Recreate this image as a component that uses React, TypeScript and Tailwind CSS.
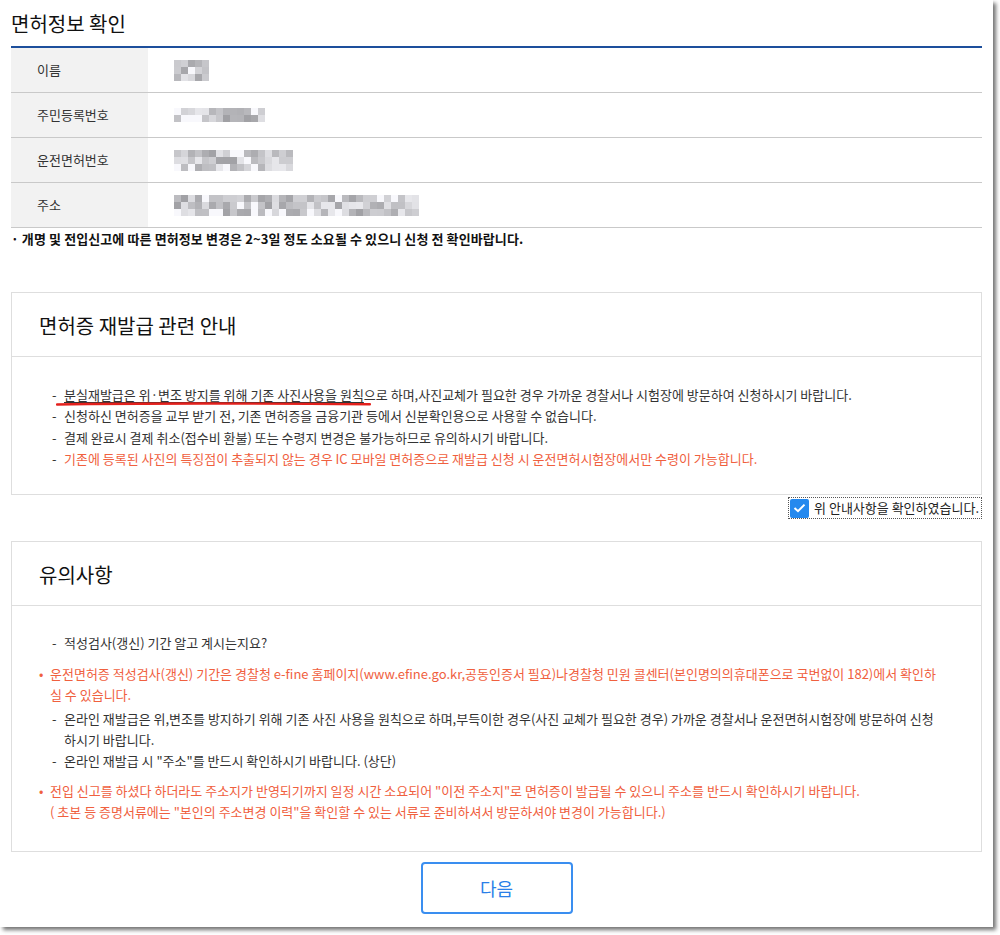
import React from "react";

const rows = [
  { label: "이름", cols: 5, lines: 3, seed: 7 },
  { label: "주민등록번호", cols: 13, lines: 2, seed: 19 },
  { label: "운전면허번호", cols: 17, lines: 3, seed: 31 },
  { label: "주소", cols: 35, lines: 3, seed: 53 },
];

// pixelated blocks standing in for the masked personal data
function Mosaic({ cols, lines, seed }: { cols: number; lines: number; seed: number }) {
  const cells: string[] = [];
  let s = seed;
  for (let i = 0; i < cols * lines; i++) {
    s = (s * 9301 + 49297) % 233280;
    const r = s / 233280;
    const v = r > 0.85 ? 248 : Math.round(160 + r * 85);
    cells.push(`rgb(${v},${v},${Math.min(255, v + 4)})`);
  }
  return (
    <div className="grid" style={{ gridTemplateColumns: `repeat(${cols}, 7px)` }}>
      {cells.map((c, i) => (
        <div key={i} className="h-[7px]" style={{ background: c }} />
      ))}
    </div>
  );
}

function Dash({ children, red }: { children: React.ReactNode; red?: boolean }) {
  return (
    <li className="flex">
      <span className="w-[12px] shrink-0 text-[#333]">-</span>
      <span className={red ? "text-[#f0603e]" : "text-[#333]"}>{children}</span>
    </li>
  );
}

function Bullet({ children, className }: { children: React.ReactNode; className?: string }) {
  return (
    <div className={"flex text-[#f0603e] " + (className ?? "")}>
      <span className="w-[11px] shrink-0">•</span>
      <span>{children}</span>
    </div>
  );
}

export default function App() {
  const [checked, setChecked] = React.useState(true);

  return (
    <div className="min-h-[935px] bg-white font-['Noto_Sans_CJK_KR','Noto_Sans',sans-serif] text-[13px] text-[#333]">
      <div className="h-[927px] w-[993px] bg-white px-[11px] shadow-[3px_3px_4px_rgba(0,0,0,0.55)]">
        {/* 면허정보 */}
        <h1 className="border-b-2 border-[#1d4f9c] pt-[12px] pb-[10px] text-[20px] leading-[24px] text-[#111]">
          면허정보 확인
        </h1>
        <div>
          {rows.map((r) => (
            <div key={r.label} className="flex h-[45px] border-b border-[#c9c9c9]">
              <div className="flex w-[137px] items-center bg-[#f2f2f2] pl-[26px] text-[#333]">{r.label}</div>
              <div className="flex items-center pl-[26px]">
                <Mosaic cols={r.cols} lines={r.lines} seed={r.seed} />
              </div>
            </div>
          ))}
        </div>
        <p className="font-bold leading-[21px] tracking-[0.1px] text-[#111]">
          · 개명 및 전입신고에 따른 면허정보 변경은 2~3일 정도 소요될 수 있으니 신청 전 확인바랍니다.
        </p>

        {/* 재발급 안내 */}
        <section className="mt-[43px] border border-[#dedede]">
          <h2 className="border-b border-[#dedede] pt-[19px] pb-[16px] pl-[27px] text-[20px] leading-[28px] text-[#111]">
            면허증 재발급 관련 안내
          </h2>
          <ul className="pt-[27px] pb-[25px] pl-[40px] leading-[21.3px]">
            <Dash>
              <span className="relative">
                <span className="underline decoration-[#333] underline-offset-2">
                  분실재발급은 위·변조 방지를 위해 기존 사진사용을 원칙
                </span>
                <svg
                  className="pointer-events-none absolute left-[-8px] top-[16px] h-[6px] w-[calc(100%+16px)]"
                  viewBox="0 0 318 6"
                  preserveAspectRatio="none"
                >
                  <path d="M1 3.5 C 80 2.2, 200 2.4, 316 3.2" stroke="#e3201c" strokeWidth="2.4" fill="none" strokeLinecap="round" />
                </svg>
              </span>
              으로 하며,사진교체가 필요한 경우 가까운 경찰서나 시험장에 방문하여 신청하시기 바랍니다.
            </Dash>
            <Dash>신청하신 면허증을 교부 받기 전, 기존 면허증을 금융기관 등에서 신분확인용으로 사용할 수 없습니다.</Dash>
            <Dash>결제 완료시 결제 취소(접수비 환불) 또는 수령지 변경은 불가능하므로 유의하시기 바랍니다.</Dash>
            <Dash red>
              기존에 등록된 사진의 특징점이 추출되지 않는 경우 IC 모바일 면허증으로 재발급 신청 시 운전면허시험장에서만 수령이 가능합니다.
            </Dash>
          </ul>
        </section>

        <div className="mt-[2px] flex justify-end">
          <label className="flex h-[22px] cursor-pointer items-center gap-[5px] border border-dotted border-[#555] pl-[1px] pr-[2px] text-[#222]">
            <button
              type="button"
              onClick={() => setChecked(!checked)}
              className={
                "flex h-[19px] w-[19px] items-center justify-center rounded-[2px] " +
                (checked ? "bg-[#2589ee]" : "border border-[#888] bg-white")
              }
            >
              {checked && (
                <svg width="13" height="10" viewBox="0 0 13 10">
                  <path d="M1.5 5 L5 8.2 L11.5 1.6" stroke="white" strokeWidth="2" fill="none" />
                </svg>
              )}
            </button>
            위 안내사항을 확인하였습니다.
          </label>
        </div>

        {/* 유의사항 */}
        <section className="mt-[22px] border border-[#dedede]">
          <h2 className="border-b border-[#dedede] pt-[19px] pb-[16px] pl-[27px] text-[20px] leading-[28px] text-[#111]">
            유의사항
          </h2>
          <div className="pt-[26px] pb-[29px] pl-[27px] pr-[40px] leading-[21px]">
            <ul className="pl-[13px]">
              <Dash>적성검사(갱신) 기간 알고 계시는지요?</Dash>
            </ul>
            <Bullet className="mt-[10px]">
              운전면허증 적성검사(갱신) 기간은 경찰청 e-fine 홈페이지(www.efine.go.kr,공동인증서 필요)나경찰청 민원 콜센터(본인명의의휴대폰으로 국번없이 182)에서 확인하실 수 있습니다.
            </Bullet>
            <ul className="mt-[3px] pl-[13px]">
              <Dash>
                온라인 재발급은 위,변조를 방지하기 위해 기존 사진 사용을 원칙으로 하며,부득이한 경우(사진 교체가 필요한 경우) 가까운 경찰서나 운전면허시험장에 방문하여 신청하시기 바랍니다.
              </Dash>
              <Dash>온라인 재발급 시 "주소"를 반드시 확인하시기 바랍니다. (상단)</Dash>
            </ul>
            <Bullet className="mt-[9px]">
              전입 신고를 하셨다 하더라도 주소지가 반영되기까지 일정 시간 소요되어 "이전 주소지"로 면허증이 발급될 수 있으니 주소를 반드시 확인하시기 바랍니다.
              <br />( 초본 등 증명서류에는 "본인의 주소변경 이력"을 확인할 수 있는 서류로 준비하셔서 방문하셔야 변경이 가능합니다.)
            </Bullet>
          </div>
        </section>

        <div className="mt-[10px] flex justify-center">
          <button
            type="button"
            className="h-[52px] w-[152px] rounded-[4px] border-2 border-[#3a8ef0] bg-white text-[18px] text-[#2a7fe8]"
          >
            다음
          </button>
        </div>
      </div>
    </div>
  );
}
